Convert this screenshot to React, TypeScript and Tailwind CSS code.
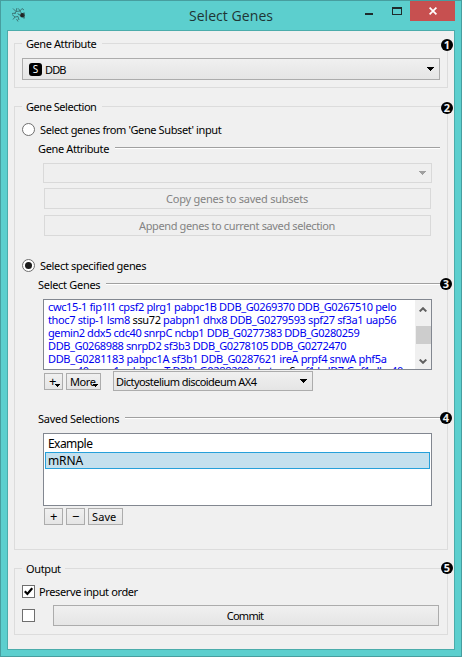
import type { ReactNode } from "react";

function Caret({ className = "" }: { className?: string }) {
  return (
    <svg className={className} width="7" height="4" viewBox="0 0 7 4" shapeRendering="crispEdges" fill="currentColor">
      <path d="M0 0h7v1H6v1H5v1H4v1H3V3H2V2H1V1H0z" />
    </svg>
  );
}

function Badge({ children, className = "" }: { children: ReactNode; className?: string }) {
  return (
    <span
      className={`absolute flex size-[12px] items-center justify-center rounded-full bg-black font-['Open_Sans',sans-serif] text-[11px] font-bold leading-[12px] tracking-normal text-[#f0f0f0] ${className}`}
    >
      {children}
    </span>
  );
}

function Group({ title, badge, className = "", titleClass = "", badgeClass = "top-[-5px]", children }: {
  title: string;
  badge: string;
  className?: string;
  titleClass?: string;
  badgeClass?: string;
  children: ReactNode;
}) {
  return (
    <section className={`relative border border-[#dcdcdc] ${className}`}>
      <span className={`absolute left-[7px] top-[-8px] bg-[#f0f0f0] pl-[4px] leading-[15px] ${titleClass}`}>{title}</span>
      <Badge className={`right-[-6px] ${badgeClass}`}>{badge}</Badge>
      {children}
    </section>
  );
}

function SubHeader({ title, badge, className = "" }: { title: string; badge?: string; className?: string }) {
  return (
    <div className={`relative flex h-[15px] items-center gap-[6px] ${className}`}>
      <span>{title}</span>
      <span className="mb-px h-[2px] flex-1 border-t border-[#a0a0a0] bg-white" />
      {badge && <Badge className="right-[-11px] top-[1px]">{badge}</Badge>}
    </div>
  );
}

function Radio({ checked }: { checked?: boolean }) {
  return (
    <svg width="13" height="13" viewBox="0 0 13 13">
      <circle cx="6.5" cy="6.5" r="6" fill="#fff" stroke="#6e6e6e" />
      {checked && <circle cx="6.5" cy="6.5" r="3.5" fill="#1c1c1c" />}
    </svg>
  );
}

function CheckBox({ checked }: { checked?: boolean }) {
  return (
    <span className="flex size-[13px] items-center justify-center border border-[#6e6e6e] bg-white">
      {checked && (
        <svg width="9" height="9" viewBox="0 0 9 9" fill="none" stroke="#000" strokeWidth="2.2">
          <path d="M.8 4.2 3.4 6.9 8.2 1.2" />
        </svg>
      )}
    </span>
  );
}

const button = "flex items-center border border-[#acacac] bg-linear-to-b from-[#f0f0f0] to-[#e5e5e5]";
const disabled = "flex items-center justify-center border border-[#d9d9d9] bg-[#efefef] text-[#838383]";

export default function App() {
  return (
    <div className="flex h-[657px] w-[462px] flex-col overflow-hidden whitespace-nowrap border border-[#479e9f] bg-[#5ccfce] px-[6px] pb-[6px] font-['Noto_Sans','Open_Sans',sans-serif] text-[11px] leading-[15px] tracking-[-0.37px] text-black">
      <header className="relative flex h-[29px] shrink-0 justify-center">
        <svg className="absolute left-[4px] top-[6px]" width="16" height="16" viewBox="0 0 16 16" fill="none" stroke="#39706f">
          <path d="M2 1.5 5 4.5 3.5 7M6 1 5 4.5 9 4 11 1.5M7.5 1.5 9 4 11 7M1 7.5 4 10 2 12.5M4 10 7 9.5 8 13M5.5 12 7 14.5M1 6.5 5 6M11 1.5 13 3" strokeWidth=".9" />
          <circle cx="11.3" cy="8.2" r="2.2" fill="#222" stroke="none" />
          <path d="M13 5.5v6M9 8.5 7 6.5" stroke="#263f3f" />
        </svg>
        <h1 className="pt-[5px] font-['Open_Sans',sans-serif] text-[14px] leading-[20px] tracking-[0.05px] text-[#1f3535]">Select Genes</h1>
        <div className="absolute right-0 top-0 flex h-[20px]">
          <span className="mr-[19px] mt-[12px] h-[2px] w-[8px] bg-[#1e2c2c]" />
          <span className="mr-[8px] mt-[6px] h-[8px] w-[10px] border border-t-2 border-[#1e2c2c]" />
          <span className="flex w-[45px] items-center justify-center bg-[#c75050]">
            <svg width="8" height="8" viewBox="0 0 8 8" stroke="#fff" strokeWidth="1.7">
              <path d="M.6.6 7.4 7.4M7.4.6.6 7.4" />
            </svg>
          </span>
        </div>
      </header>

      <main className="flex flex-1 flex-col border border-[#4bacab] bg-[#f0f0f0] px-[6px] pt-[12px]">
        <Group title="Gene Attribute" badge="1" className="h-[45px] px-[7px] pt-[14px]" titleClass="w-[80px] tracking-[-0.42px]">
          <div className={`${button} h-[22px] pl-[6px] pr-[5px]`}>
            <span className="mr-[3px] flex size-[13px] items-center justify-center rounded-[3px] bg-black text-[10px] leading-[12px] tracking-normal text-white">S</span>
            <span className="tracking-[-0.85px]">DDB</span>
            <Caret className="ml-auto" />
          </div>
        </Group>

        <Group title="Gene Selection" badge="2" className="mt-[18px] h-[444px]" titleClass="w-[80px] tracking-[-0.46px]">
          <div className="mt-[15px] flex h-[15px] items-center gap-[5px] pl-[7px]">
            <Radio />
            <span className="tracking-[-0.39px]">Select genes from 'Gene Subset' input</span>
          </div>
          <SubHeader title="Gene Attribute" className="ml-[23px] mr-[7px] mt-[4px]" />
          <div className="ml-[28px] mr-[15px] mt-[7px] flex h-[20px] items-center justify-end border border-[#d9d9d9] bg-[#efefef] pr-[5px] text-[#a0a0a0]">
            <Caret />
          </div>
          <div className={`${disabled} ml-[29px] mr-[16px] mt-[5px] h-[21px] pr-px tracking-[-0.25px]`}>Copy genes to saved subsets</div>
          <div className={`${disabled} ml-[29px] mr-[16px] mt-[6px] h-[21px] pr-px`}>Append genes to current saved selection</div>

          <div className="mt-[22px] flex h-[15px] items-center gap-[5px] pl-[7px]">
            <Radio checked />
            <span className="tracking-[-0.33px]">Select specified genes</span>
          </div>
          <SubHeader title="Select Genes" badge="3" className="ml-[23px] mr-[6px] mt-[4px] tracking-[-0.3px]" />

          <div className="ml-[28px] mr-[15px] mt-[7px] flex h-[71px] overflow-hidden border border-[#828790] bg-white">
            <div className="min-w-0 flex-1 overflow-hidden pl-[4px] leading-[13px] text-[#0000f0]">
              <p className="tracking-[-0.38px]">cwc15-1 fip1l1 cpsf2 plrg1 pabpc1B DDB_G0269370 DDB_G0267510 pelo</p>
              <p className="tracking-[-0.36px]">thoc7 stip-1 lsm8 <span className="text-black">ssu72</span> pabpn1 dhx8 DDB_G0279593 spf27 sf3a1 uap56</p>
              <p className="tracking-[-0.42px]">gemin2 ddx5 cdc40 snrpC ncbp1 DDB_G0277383 DDB_G0280259</p>
              <p className="tracking-[-0.39px]">DDB_G0268988 snrpD2 sf3b3 DDB_G0278105 DDB_G0272470</p>
              <p className="tracking-[-0.35px]">DDB_G0281183 pabpc1A sf3b1 DDB_G0287621 ireA prpf4 snwA phf5a</p>
              <p className="-mt-px tracking-[-0.3px]">snrnp40 rnps1 rnb2hm T DDB_G0288209 abstrm <span className="text-black">Sm</span>f1 bdD7 Gpf1 dhx40</p>
            </div>
            <div className="flex w-[16px] flex-col items-center bg-[#f0f0f0] text-[#606060]">
              <svg className="mt-[7px]" width="8" height="5" viewBox="0 0 8 5" fill="none" stroke="currentColor" strokeWidth="2"><path d="M.7 4.4 4 1.2 7.3 4.4" /></svg>
              <span className="mt-[14px] h-[18px] w-[15px] bg-[#cdcdcd]" />
              <svg className="mt-[15px]" width="8" height="5" viewBox="0 0 8 5" fill="none" stroke="currentColor" strokeWidth="2"><path d="M.7.6 4 3.8 7.3.6" /></svg>
            </div>
          </div>
          <div className="ml-[29px] mt-px flex items-start">
            <div className={`${button} relative mt-[2px] h-[17px] w-[19px] pl-[4px] text-[13px]`}>+<Caret className="absolute bottom-[2px] right-[2px] h-[3px] w-[5px]" /></div>
            <div className={`${button} relative ml-[3px] mt-[2px] h-[17px] w-[35px] pl-[3px] tracking-[-0.4px]`}>More<Caret className="absolute bottom-[2px] right-[2px] h-[3px] w-[5px]" /></div>
            <div className={`${button} ml-[12px] h-[20px] w-[200px] pl-[2px] pr-[5px] tracking-[-0.55px]`}>
              Dictyostelium discoideum AX4
              <Caret className="ml-auto" />
            </div>
          </div>

          <SubHeader title="Saved Selections" badge="4" className="ml-[23px] mr-[6px] mt-[20px] tracking-[-0.28px]" />
          <div className="ml-[28px] mr-[15px] mt-[7px] h-[73px] border border-[#828790] bg-white px-px pt-[2px] text-[12px] leading-[15px]">
            <div className="h-[16px] pl-[3px] tracking-[-0.55px]">Example</div>
            <div className="h-[17px] border border-[#26a0da] bg-[#c4e0ee] pl-[2px] tracking-[-0.1px]">mRNA</div>
          </div>
          <div className="ml-[29px] mt-[2px] flex gap-[3px]">
            <div className={`${button} h-[17px] w-[19px] justify-center text-[13px]`}>+</div>
            <div className={`${button} h-[17px] w-[19px] justify-center text-[13px]`}>−</div>
            <div className={`${button} h-[17px] w-[35px] pl-[3px] tracking-[0.1px]`}>Save</div>
          </div>
        </Group>

        <Group title="Output" badge="5" badgeClass="top-[-7px]" className="mt-[18px] h-[67px] px-[7px] pt-[15px]" titleClass="w-[43px]">
          <div className="flex h-[15px] items-center gap-[4px]">
            <CheckBox checked />
            <span className="tracking-[-0.38px]">Preserve input order</span>
          </div>
          <div className="mt-[6px] flex h-[21px] items-center">
            <CheckBox />
            <div className={`${button} ml-[18px] mr-px h-[21px] flex-1 justify-center pr-[2px] tracking-[-0.75px]`}>Commit</div>
          </div>
        </Group>
      </main>
    </div>
  );
}
